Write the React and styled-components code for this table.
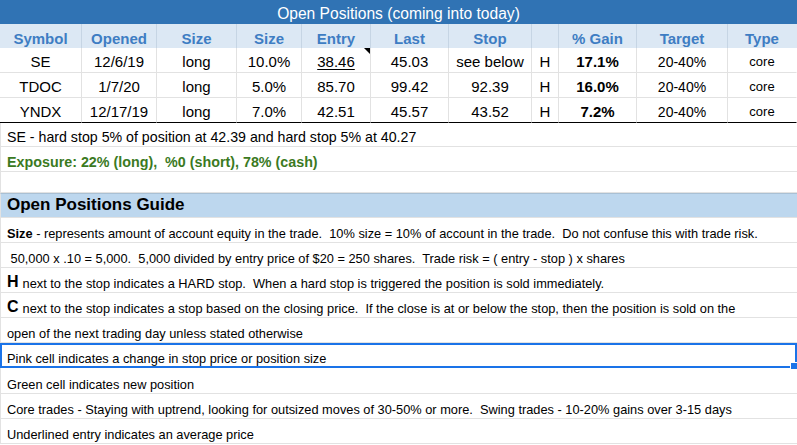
import React from "react";
import styled, { createGlobalStyle, css } from "styled-components";

const Global = createGlobalStyle`
  html, body { margin: 0; padding: 0; background: #fff; }
  body { font-family: "Liberation Sans", Arial, sans-serif; color: #000; }
`;

const GRID = "#e2e2e2";

const Sheet = styled.div`
  width: 797px;
  overflow: hidden;
`;

const Table = styled.div`
  display: grid;
  grid-template-columns: 82px 75px 80px 65px 69px 78px 83px 27px 78px 91px 69px;
  grid-template-rows: 24px 24px 25px 25px 25px;
`;

const Title = styled.div`
  grid-column: 1 / -1;
  background: #3073b4;
  color: #fff;
  font-size: 15.6px;
  display: flex;
  align-items: flex-end;
  justify-content: center;
  padding-bottom: 1px;
  box-sizing: border-box;
`;

const Head = styled.div`
  background: #dce8f4;
  color: #3e7dc3;
  font-weight: bold;
  font-size: 15px;
  display: flex;
  align-items: flex-end;
  justify-content: center;
  padding-bottom: 1px;
  box-sizing: border-box;
  border-right: 1px solid ${(p) => (p.$last ? "transparent" : "#c6d5e4")};
`;

const Cell = styled.div`
  position: relative;
  display: flex;
  align-items: flex-end;
  justify-content: center;
  box-sizing: border-box;
  padding-bottom: ${(p) => (p.$small ? "3px" : "2px")};
  font-size: ${(p) => p.$size || 15}px;
  font-weight: ${(p) => (p.$bold ? "bold" : "normal")};
  border-right: 1px solid ${(p) => (p.$lastCol ? "transparent" : GRID)};
  border-bottom: 1px solid ${(p) => (p.$lastRow ? "#000" : GRID)};
  white-space: nowrap;
`;

const Underlined = styled.span`
  text-decoration: underline;
  text-underline-offset: 2px;
`;

const Comment = styled.span`
  position: absolute;
  top: 0;
  right: 0;
  width: 0;
  height: 0;
  border-top: 6px solid #000;
  border-left: 6px solid transparent;
`;

const Row = styled.div`
  position: relative;
  height: ${(p) => p.$h || 25}px;
  box-sizing: border-box;
  display: flex;
  align-items: flex-end;
  padding: 0 0 1px 6px;
  border-left: 1px solid ${GRID};
  border-bottom: 1px solid ${GRID};
  font-size: ${(p) => p.$size || 12.8}px;
  white-space: pre;
  ${(p) =>
    p.$selected &&
    css`
      border: 2px solid #1a73e8;
      padding-left: 5px;
      padding-bottom: 0;
      &::after {
        content: "";
        position: absolute;
        right: -3px;
        bottom: -4px;
        width: 6px;
        height: 6px;
        background: #1a73e8;
        border: 1px solid #fff;
      }
    `}
`;

const Exposure = styled(Row)`
  color: #3b7a1f;
  font-weight: bold;
`;

const GuideHeader = styled(Row)`
  background: #bdd7ee;
  border-top: 1px solid #a9c0d4;
  font-size: 17px;
  font-weight: bold;
  padding-bottom: 2px;
`;

const Key = styled.b`
  font-size: ${(p) => p.$size || 12.8}px;
  margin-right: ${(p) => (p.$gap ? "4px" : "0")};
`;

const heads = ["Symbol", "Opened", "Size", "Size", "Entry", "Last", "Stop", "", "% Gain", "Target", "Type"];

const rows = [
  ["SE", "12/6/19", "long", "10.0%", "38.46", "45.03", "see below", "H", "17.1%", "20-40%", "core"],
  ["TDOC", "1/7/20", "long", "5.0%", "85.70", "99.42", "92.39", "H", "16.0%", "20-40%", "core"],
  ["YNDX", "12/17/19", "long", "7.0%", "42.51", "45.57", "43.52", "H", "7.2%", "20-40%", "core"],
];

export default function App() {
  return (
    <>
      <Global />
      <Sheet>
        <Table>
          <Title>Open Positions (coming into today)</Title>
          {heads.map((h, i) => (
            <Head key={i} $last={i === heads.length - 1}>{h}</Head>
          ))}
          {rows.map((r, ri) =>
            r.map((v, ci) => (
              <Cell
                key={ri + "-" + ci}
                $lastRow={ri === rows.length - 1}
                $lastCol={ci === r.length - 1}
                $bold={ci === 8}
                $size={ci === 10 ? 13 : ci === 9 ? 14 : 15}
                $small={ci === 10}
              >
                {ri === 0 && ci === 4 ? (
                  <>
                    <Underlined>{v}</Underlined>
                    <Comment />
                  </>
                ) : (
                  v
                )}
              </Cell>
            ))
          )}
        </Table>
        <Row $h={24} $size={14.2}>SE - hard stop 5% of position at 42.39 and hard stop 5% at 40.27</Row>
        <Exposure $size={14.3}>Exposure: 22% (long),  %0 (short), 78% (cash)</Exposure>
        <Row $h={21} />
        <GuideHeader>Open Positions Guide</GuideHeader>
        <Row>
          <Key>Size</Key> - represents amount of account equity in the trade.  10% size = 10% of account in the trade.  Do not confuse this with trade risk.
        </Row>
        <Row> 50,000 x .10 = 5,000.  5,000 divided by entry price of $20 = 250 shares.  Trade risk = ( entry - stop ) x shares</Row>
        <Row>
          <Key $size={16} $gap>H</Key>next to the stop indicates a HARD stop.  When a hard stop is triggered the position is sold immediately.
        </Row>
        <Row>
          <Key $size={16} $gap>C</Key>next to the stop indicates a stop based on the closing price.  If the close is at or below the stop, then the position is sold on the
        </Row>
        <Row>open of the next trading day unless stated otherwise</Row>
        <Row $selected>Pink cell indicates a change in stop price or position size</Row>
        <Row $h={26}>Green cell indicates new position</Row>
        <Row>Core trades - Staying with uptrend, looking for outsized moves of 30-50% or more.  Swing trades - 10-20% gains over 3-15 days</Row>
        <Row>Underlined entry indicates an average price</Row>
      </Sheet>
    </>
  );
}
